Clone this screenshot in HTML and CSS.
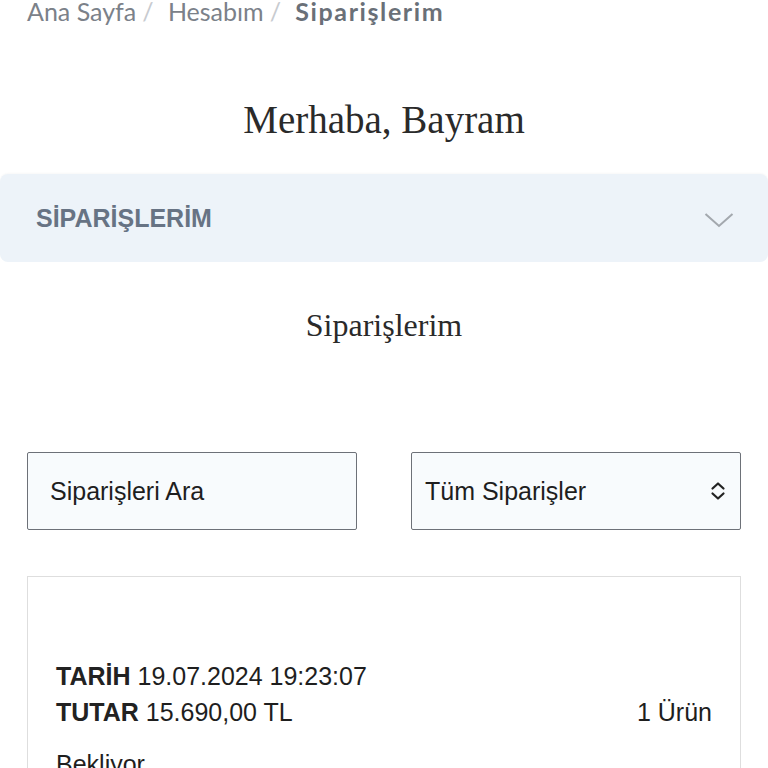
FILE: index.html
```
<!DOCTYPE html>
<html lang="tr">
<head>
<meta charset="utf-8">
<link rel="stylesheet" href="styles.css">
</head>
<body>
<nav class="breadcrumb">
  <span class="crumb">Ana Sayfa</span><span class="sep">/</span>
  <span class="crumb">Hesabım</span><span class="sep">/</span>
  <span class="crumb current">Siparişlerim</span>
</nav>
<h1 class="greeting">Merhaba, Bayram</h1>
<div class="accordion">
  <span class="acc-title">SİPARİŞLERİM</span>
  <svg class="chev" width="30" height="16" viewBox="0 0 30 16"><path d="M1.5 2 L15 14 L28.5 2" fill="none" stroke="#a3a8ae" stroke-width="2"/></svg>
</div>
<h2 class="section-title">Siparişlerim</h2>
<div class="filters">
  <div class="field"><span class="field-text">Siparişleri Ara</span></div>
  <div class="field select"><span class="field-text">Tüm Siparişler</span>
    <svg class="updown" width="16" height="20" viewBox="0 0 16 20"><path d="M2.5 7.5 L8 2.5 L13.5 7.5 M2.5 12.5 L8 17.5 L13.5 12.5" fill="none" stroke="#222" stroke-width="2.2" stroke-linecap="round" stroke-linejoin="round"/></svg>
  </div>
</div>
<div class="card">
  <div class="row"><span><b>TARİH</b> 19.07.2024 19:23:07</span></div>
  <div class="row"><span><b>TUTAR</b> 15.690,00 TL</span><span>1 Ürün</span></div>
  <div class="status">Bekliyor</div>
</div>
</body>
</html>
```
FILE: styles.css
```
html, body { margin: 0; padding: 0; background: #fff; }
body { width: 768px; overflow: hidden; }
.breadcrumb {
  font-family: Lato, "Open Sans", sans-serif;
  font-size: 25px;
  line-height: 26px;
  color: #7b8189;
  padding-left: 27px;
  margin-top: -2px;
  white-space: nowrap;
}
.sep { color: #c8cbd0; margin: 0 8px 0 6px; }
.current { font-weight: 700; color: #6a7078; letter-spacing: 1.6px; }
.greeting {
  font-family: "Liberation Serif", serif;
  font-weight: 400;
  font-size: 39px;
  color: #2a2a2a;
  text-align: center;
  margin: 74px 0 0;
  line-height: 44px;
}
.accordion {
  margin-top: 32px;
  height: 88px;
  background: #edf3f9;
  border-radius: 8px;
  display: flex;
  align-items: center;
  justify-content: space-between;
  padding: 0 34px 0 36px;
  box-shadow: 0 -1px 2px rgba(0,0,0,0.03);
}
.acc-title {
  font-family: "Liberation Sans", Arial, sans-serif;
  font-weight: 700;
  font-size: 25px;
  color: #677384;
}
.chev { margin-top: 4px; }
.section-title {
  font-family: "Liberation Serif", serif;
  font-weight: 400;
  font-size: 32px;
  color: #2a2a2a;
  text-align: center;
  margin: 45px 0 0;
  line-height: 36px;
}
.filters {
  display: flex;
  justify-content: space-between;
  padding: 0 27px;
  margin-top: 109px;
}
.field {
  width: 330px;
  height: 78px;
  box-sizing: border-box;
  border: 1.5px solid #6d7178;
  border-radius: 2px;
  background: #f8fbfd;
  display: flex;
  align-items: center;
  padding-left: 22px;
  padding-right: 14px;
}
.select { padding-left: 13px; justify-content: space-between; }
.field-text {
  font-family: "Liberation Sans", Arial, sans-serif;
  font-size: 25px;
  color: #1e1e1e;
}
.card {
  margin: 46px 27px 0;
  border: 1.5px solid #dedede;
  border-bottom: none;
  padding: 81px 28px 0 28px;
  height: 300px;
  font-family: "Liberation Sans", Arial, sans-serif;
  font-size: 25px;
  color: #1e1e1e;
}
.row {
  display: flex;
  justify-content: space-between;
  line-height: 36px;
}
.row b { color: #222; }
.status { margin-top: 16px; line-height: 36px; }
```
